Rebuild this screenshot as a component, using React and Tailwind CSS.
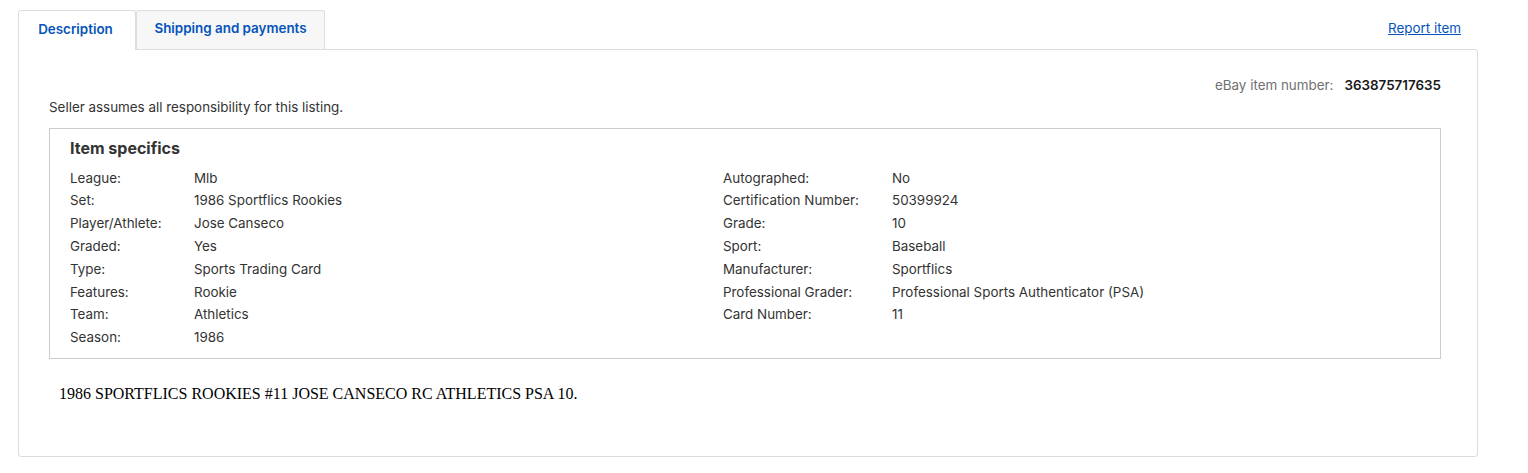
const leftSpecs = [
  ["League:", "Mlb"],
  ["Set:", "1986 Sportflics Rookies"],
  ["Player/Athlete:", "Jose Canseco"],
  ["Graded:", "Yes"],
  ["Type:", "Sports Trading Card"],
  ["Features:", "Rookie"],
  ["Team:", "Athletics"],
  ["Season:", "1986"],
];

const rightSpecs = [
  ["Autographed:", "No"],
  ["Certification Number:", "50399924"],
  ["Grade:", "10"],
  ["Sport:", "Baseball"],
  ["Manufacturer:", "Sportflics"],
  ["Professional Grader:", "Professional Sports Authenticator (PSA)"],
  ["Card Number:", "11"],
];

function SpecList({ rows, labelWidth }) {
  return (
    <dl className="flex flex-col">
      {rows.map(([label, value]) => (
        <div key={label} className="flex h-[22.8px] items-center">
          <dt className={`${labelWidth} shrink-0 text-[#333]`}>{label}</dt>
          <dd className="text-[#333]">{value}</dd>
        </div>
      ))}
    </dl>
  );
}

export default function App() {
  return (
    <div
      className="bg-white min-h-screen pt-[10px] pl-[18px] pr-[50px] text-[13.4px]"
      style={{ fontFamily: "Inter, 'Noto Sans', sans-serif" }}
    >
      <div className="flex items-end justify-between">
        <div className="flex">
          <button className="relative z-10 -mb-px h-[40px] w-[118px] rounded-t-[3px] border border-b-0 border-[#ddd] bg-white pr-[3px] pb-[3px] text-[13.4px] font-semibold text-[#0654ba]">
            Description
          </button>
          <button className="h-[39px] w-[189px] rounded-t-[3px] border border-b-0 border-[#ddd] bg-[#f7f7f7] pb-[3px] text-[13.4px] font-semibold text-[#0654ba]">
            Shipping and payments
          </button>
        </div>
        <a
          href="#"
          className="mb-[11px] mr-[17px] text-[13.4px] text-[#0654ba] underline"
        >
          Report item
        </a>
      </div>

      <div className="h-[408px] rounded-b-[3px] rounded-tr-[3px] border border-[#ddd] px-[30px] pt-[25px]">
        <div className="flex justify-end pr-[6px]">
          <span className="text-[#707070]">eBay item number:</span>
          <span className="ml-[11px] font-semibold text-[#191919]">363875717635</span>
        </div>
        <p className="mt-[2px] text-[#333]">Seller assumes all responsibility for this listing.</p>

        <div className="mr-[6px] mt-[11px] border border-[#ccc] px-[20px] pt-[7px] pb-[9px]">
          <h2 className="mb-[6px] text-[16px] font-bold leading-[24px] text-[#333]">Item specifics</h2>
          <div className="flex">
            <div className="w-[653px] shrink-0">
              <SpecList rows={leftSpecs} labelWidth="w-[124px]" />
            </div>
            <SpecList rows={rightSpecs} labelWidth="w-[169px]" />
          </div>
        </div>

        <p
          className="ml-[10px] mt-[23px] text-[16px] text-black"
          style={{ fontFamily: "'Liberation Serif', serif" }}
        >
          1986 SPORTFLICS ROOKIES #11 JOSE CANSECO RC ATHLETICS PSA 10.
        </p>
      </div>
    </div>
  );
}
